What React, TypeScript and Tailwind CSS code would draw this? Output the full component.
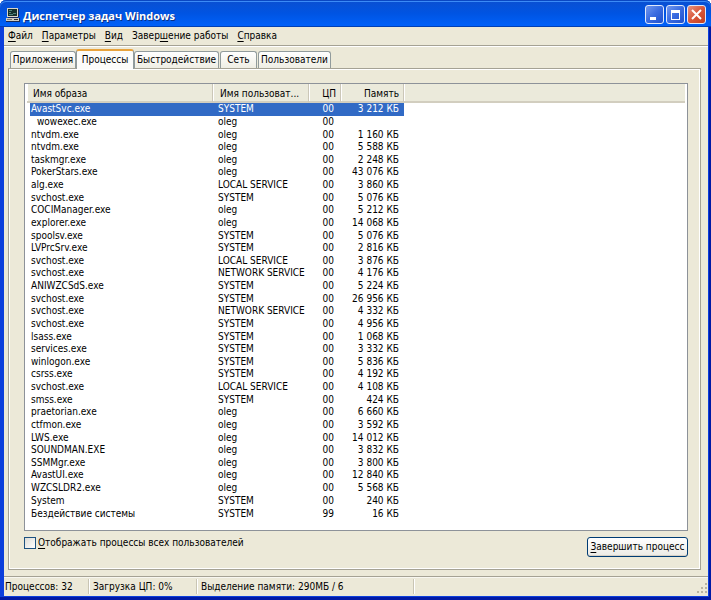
import React, { useState } from "react";
import clsx from "clsx";

type Process = {
  name: string;
  user: string;
  cpu: string;
  memory: string;
  nested?: boolean;
};

const processes: Process[] = [
  { name: "AvastSvc.exe", user: "SYSTEM", cpu: "00", memory: "3 212 КБ" },
  { name: "wowexec.exe", user: "oleg", cpu: "00", memory: "", nested: true },
  { name: "ntvdm.exe", user: "oleg", cpu: "00", memory: "1 160 КБ" },
  { name: "ntvdm.exe", user: "oleg", cpu: "00", memory: "5 588 КБ" },
  { name: "taskmgr.exe", user: "oleg", cpu: "00", memory: "2 248 КБ" },
  { name: "PokerStars.exe", user: "oleg", cpu: "00", memory: "43 076 КБ" },
  { name: "alg.exe", user: "LOCAL SERVICE", cpu: "00", memory: "3 860 КБ" },
  { name: "svchost.exe", user: "SYSTEM", cpu: "00", memory: "5 076 КБ" },
  { name: "COCIManager.exe", user: "oleg", cpu: "00", memory: "5 212 КБ" },
  { name: "explorer.exe", user: "oleg", cpu: "00", memory: "14 068 КБ" },
  { name: "spoolsv.exe", user: "SYSTEM", cpu: "00", memory: "5 076 КБ" },
  { name: "LVPrcSrv.exe", user: "SYSTEM", cpu: "00", memory: "2 816 КБ" },
  { name: "svchost.exe", user: "LOCAL SERVICE", cpu: "00", memory: "3 876 КБ" },
  { name: "svchost.exe", user: "NETWORK SERVICE", cpu: "00", memory: "4 176 КБ" },
  { name: "ANIWZCSdS.exe", user: "SYSTEM", cpu: "00", memory: "5 224 КБ" },
  { name: "svchost.exe", user: "SYSTEM", cpu: "00", memory: "26 956 КБ" },
  { name: "svchost.exe", user: "NETWORK SERVICE", cpu: "00", memory: "4 332 КБ" },
  { name: "svchost.exe", user: "SYSTEM", cpu: "00", memory: "4 956 КБ" },
  { name: "lsass.exe", user: "SYSTEM", cpu: "00", memory: "1 068 КБ" },
  { name: "services.exe", user: "SYSTEM", cpu: "00", memory: "3 332 КБ" },
  { name: "winlogon.exe", user: "SYSTEM", cpu: "00", memory: "5 836 КБ" },
  { name: "csrss.exe", user: "SYSTEM", cpu: "00", memory: "4 192 КБ" },
  { name: "svchost.exe", user: "LOCAL SERVICE", cpu: "00", memory: "4 108 КБ" },
  { name: "smss.exe", user: "SYSTEM", cpu: "00", memory: "424 КБ" },
  { name: "praetorian.exe", user: "oleg", cpu: "00", memory: "6 660 КБ" },
  { name: "ctfmon.exe", user: "oleg", cpu: "00", memory: "3 592 КБ" },
  { name: "LWS.exe", user: "oleg", cpu: "00", memory: "14 012 КБ" },
  { name: "SOUNDMAN.EXE", user: "oleg", cpu: "00", memory: "3 832 КБ" },
  { name: "SSMMgr.exe", user: "oleg", cpu: "00", memory: "3 800 КБ" },
  { name: "AvastUI.exe", user: "oleg", cpu: "00", memory: "12 840 КБ" },
  { name: "WZCSLDR2.exe", user: "oleg", cpu: "00", memory: "5 568 КБ" },
  { name: "System", user: "SYSTEM", cpu: "00", memory: "240 КБ" },
  { name: "Бездействие системы", user: "SYSTEM", cpu: "99", memory: "16 КБ" },
];

// "key" is the underlined access letter, "before" and "after" surround it
const menus = [
  { before: "", key: "Ф", after: "айл" },
  { before: "", key: "П", after: "араметры" },
  { before: "", key: "В", after: "ид" },
  { before: "Завер", key: "ш", after: "ение работы" },
  { before: "", key: "С", after: "правка" },
];

const tabs = [
  { label: "Приложения", width: "w-[66px]" },
  { label: "Процессы", width: "w-[58px]" },
  { label: "Быстродействие", width: "w-[85px]" },
  { label: "Сеть", width: "w-[37px]" },
  { label: "Пользователи", width: "w-[73px]" },
];

const ComputerIcon = () => (
  <svg width="14" height="14" viewBox="0 0 14 14" aria-hidden="true">
    <rect x="1" y="0" width="11" height="9" fill="#d8d5c8" />
    <rect x="2" y="1" width="9" height="7" fill="#16302c" />
    <path d="M3 2.5h3M3 4.5h2M7 5.5h3M3 6.5h4" stroke="#4f8378" fill="none" />
    <path d="M12.5 1v8M2 9.5h10" stroke="#1b2a52" />
    <rect x="0" y="10" width="13" height="3" fill="#d0cdc2" />
    <rect x="1" y="11" width="5" height="1" fill="#77756c" />
    <rect x="8" y="11" width="4" height="1" fill="#2b2b2b" />
    <path d="M0 13.5h14M13.5 10v4" stroke="#1b2a52" />
  </svg>
);

const captionButton =
  "flex size-[19px] items-center justify-center rounded-[3px] border border-[#dfe8fb]";

const TitleBar: React.FC = () => (
  <header className="flex h-[27px] items-center rounded-t-md bg-linear-to-b from-[#0a4fd0] via-[#0054e3] to-[#0062fb] pt-[2px] pr-[5px] pl-[6px] shadow-[inset_0_1px_0_#0a47c2,inset_0_2px_0_#3b8bf7,inset_0_-1px_0_#0140b4]">
    <ComputerIcon />
    <h1 className="ml-[3px] flex-1 pt-[2px] font-['Open_Sans',sans-serif] text-[11px] leading-4 font-bold text-white [text-shadow:1px_1px_#0a2f86]">
      Диспетчер задач Windows
    </h1>
    <div className="flex gap-[2px]">
      <button
        aria-label="Свернуть"
        className={clsx(captionButton, "bg-linear-to-br from-[#7297ee] via-[#3a6be0] to-[#1f50cc]")}
      >
        <svg width="17" height="17" viewBox="0 0 17 17">
          <rect x="4" y="11" width="6" height="3" fill="#fff" />
        </svg>
      </button>
      <button
        aria-label="Развернуть"
        className={clsx(captionButton, "bg-linear-to-br from-[#7297ee] via-[#3a6be0] to-[#1f50cc]")}
      >
        <svg width="17" height="17" viewBox="0 0 17 17">
          <rect x="4.5" y="4.5" width="8" height="9" fill="none" stroke="#fff" />
          <rect x="4" y="4" width="9" height="3" fill="#fff" />
        </svg>
      </button>
      <button
        aria-label="Закрыть"
        className={clsx(captionButton, "bg-linear-to-br from-[#e5937f] via-[#d9573a] to-[#c2401f]")}
      >
        <svg width="17" height="17" viewBox="0 0 17 17">
          <path d="M4 4l9 9M13 4l-9 9" stroke="#fff" strokeWidth="2" />
        </svg>
      </button>
    </div>
  </header>
);

const headCell =
  "h-[19px] border-r border-r-[#cbc7b8] border-b-2 border-b-[#d2cebf] bg-[#ebeadb] p-0 pt-[3px] font-normal shadow-[inset_1px_0_#fff]";

const ProcessTable: React.FC = () => {
  const [selected, setSelected] = useState(0);

  return (
    <table className="h-[436px] w-full table-fixed border-separate border-spacing-0 leading-[12px]">
      <colgroup>
        <col className="w-[186px]" />
        <col className="w-[96px]" />
        <col className="w-[32px]" />
        <col className="w-[63px]" />
        <col />
      </colgroup>
      <thead>
        <tr>
          <th className={clsx(headCell, "pl-[6px] text-left")}>Имя образа</th>
          <th className={clsx(headCell, "pl-[7px] text-left")}>Имя пользоват...</th>
          <th className={clsx(headCell, "pr-[4px] text-right")}>ЦП</th>
          <th className={clsx(headCell, "pr-[4px] text-right")}>Память</th>
          <th className={clsx(headCell, "border-r-0")}></th>
        </tr>
      </thead>
      <tbody>
        {processes.map((process, index) => {
          const cell = clsx(
            "p-0 whitespace-nowrap",
            index === selected && "bg-[#316ac5] text-white"
          );
          return (
            <tr key={index} onClick={() => setSelected(index)}>
              <td
                className={clsx(
                  cell,
                  "border-l-3 border-transparent bg-clip-padding",
                  process.nested ? "pl-[7px]" : "pl-px"
                )}
              >
                {process.name}
              </td>
              <td className={clsx(cell, "pl-[5px]")}>{process.user}</td>
              <td className={clsx(cell, "pr-[7px] text-right")}>{process.cpu}</td>
              <td className={clsx(cell, "pr-[5px] text-right")}>{process.memory}</td>
              <td className="p-0"></td>
            </tr>
          );
        })}
      </tbody>
    </table>
  );
};

const App: React.FC = () => {
  const [activeTab, setActiveTab] = useState(1);
  const [showAll, setShowAll] = useState(false);

  return (
    <div className="flex min-h-screen flex-col rounded-t-md bg-[#0c3fdc] font-['DejaVu_Sans_Condensed','DejaVu_Sans',sans-serif] text-[10px] leading-3 text-black shadow-[inset_-2px_-3px_#0019a5]">
      <TitleBar />

      <div className="mr-[3px] mb-[4px] ml-[4px] flex flex-1 flex-col bg-[#ece9d8]">
        <nav className="flex h-[19px] items-center gap-[9px] border-b border-[#a5a294] pl-[4px]">
          {menus.map((menu) => (
            <button key={menu.key}>
              {menu.before}
              <span className="underline underline-offset-2">{menu.key}</span>
              {menu.after}
            </button>
          ))}
        </nav>

        <div className="flex flex-1 flex-col border-t border-white pt-[2px] pr-[7px] pb-[6px] pl-[4px]">
          {/* Tabs */}
          <div role="tablist" className="flex items-end pl-[2px]">
            {tabs.map((tab, index) => (
              <button
                key={tab.label}
                role="tab"
                aria-selected={index === activeTab}
                onClick={() => setActiveTab(index)}
                className={clsx(
                  "flex shrink-0 items-center justify-center rounded-t-[3px] border border-b-0 whitespace-nowrap",
                  tab.width,
                  index === activeTab
                    ? "z-10 -mb-px h-[20px] border-[#919b9c] border-t-2 border-t-[#e8a33d] bg-[#fcfcfa] pb-px"
                    : "h-[17px] border-[#919b9c] bg-linear-to-b from-white to-[#efeee4]",
                  index > 2 && "ml-px"
                )}
              >
                {tab.label}
              </button>
            ))}
          </div>

          {/* Tab page */}
          <main className="flex flex-1 flex-col border border-[#a5a294] pt-[14px] pr-[12px] pb-[12px] pl-[15px] shadow-[inset_1px_1px_#fff,inset_-1px_-1px_#fff]">
            <div className="flex-1 border border-[#8d9299] bg-white px-[2px] pb-[9px]">
              <ProcessTable />
            </div>

            <div className="mt-[6px] flex items-start justify-between">
              <label className="flex items-center gap-[2px]">
                <input
                  type="checkbox"
                  checked={showAll}
                  onChange={(e) => setShowAll(e.target.checked)}
                  className="size-[12px] appearance-none border border-[#1c5180] bg-linear-to-br from-[#dcdcd7] to-white checked:bg-[#21a121]"
                />
                <span>
                  <span className="underline underline-offset-2">О</span>
                  тображать процессы всех пользователей
                </span>
              </label>
              <button className="h-[20px] w-[101px] rounded-[3px] border border-[#003c74] bg-linear-to-b from-white to-[#ecebe5] whitespace-nowrap shadow-[inset_0_-1px_#d6d0c5]">
                <span className="underline underline-offset-2">З</span>
                авершить процесс
              </button>
            </div>
          </main>
        </div>

        {/* Status bar */}
        <footer className="flex h-[20px] items-stretch border-t border-[#a5a294] shadow-[inset_0_1px_#f8f7f0]">
          <div className="my-[2px] w-[85px] border-r border-[#c9c5b4] pt-[2px] pl-px">
            Процессов: 32
          </div>
          <div className="my-[2px] w-[108px] border-r border-l border-l-white border-r-[#c9c5b4] pt-[2px] pl-[3px]">
            Загрузка ЦП: 0%
          </div>
          <div className="my-[2px] w-[217px] border-r border-l border-l-white border-r-[#c9c5b4] pt-[2px] pl-[3px]">
            Выделение памяти: 290МБ / 6
          </div>
          <div className="my-[2px] flex flex-1 items-end justify-end border-l border-l-white">
            <svg width="12" height="12" viewBox="0 0 12 12" aria-hidden="true">
              <path
                d="M9 1h2v2h-2zM5 5h2v2h-2zM9 5h2v2h-2zM1 9h2v2h-2zM5 9h2v2h-2zM9 9h2v2h-2z"
                fill="#b8b4a2"
              />
            </svg>
          </div>
        </footer>
      </div>
    </div>
  );
};

export default App;
